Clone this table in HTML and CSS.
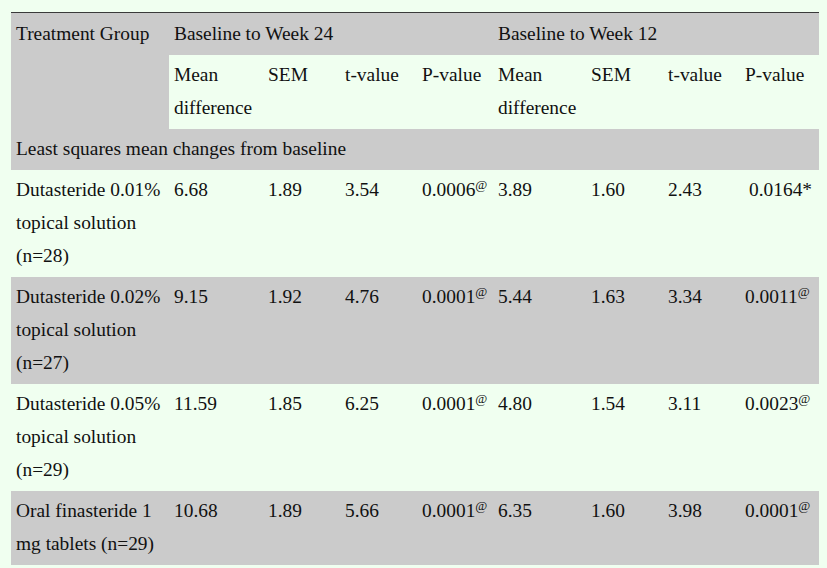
FILE: index.html
```html
<!DOCTYPE html>
<html lang="en">
<head>
<meta charset="utf-8">
<title>Least squares mean changes</title>
<link rel="stylesheet" href="styles.css">
</head>
<body>
<table class="results">
  <colgroup>
    <col class="c-group">
    <col class="c-mean1">
    <col class="c-num">
    <col class="c-num">
    <col class="c-p">
    <col class="c-mean2">
    <col class="c-num">
    <col class="c-num">
    <col class="c-last">
  </colgroup>
  <thead>
    <tr class="head-top">
      <th rowspan="2" class="gray">Treatment Group</th>
      <th colspan="4" class="gray">Baseline to Week 24</th>
      <th colspan="4" class="gray">Baseline to Week 12</th>
    </tr>
    <tr>
      <th>Mean difference</th>
      <th>SEM</th>
      <th>t-value</th>
      <th>P-value</th>
      <th>Mean difference</th>
      <th>SEM</th>
      <th>t-value</th>
      <th>P-value</th>
    </tr>
  </thead>
  <tbody>
    <tr class="gray">
      <td colspan="9">Least squares mean changes from baseline</td>
    </tr>
    <tr>
      <td>Dutasteride 0.01% topical solution (n=28)</td>
      <td>6.68</td>
      <td>1.89</td>
      <td>3.54</td>
      <td>0.0006<sup>@</sup></td>
      <td>3.89</td>
      <td>1.60</td>
      <td>2.43</td>
      <td class="shift">0.0164*</td>
    </tr>
    <tr class="gray">
      <td>Dutasteride 0.02% topical solution (n=27)</td>
      <td>9.15</td>
      <td>1.92</td>
      <td>4.76</td>
      <td>0.0001<sup>@</sup></td>
      <td>5.44</td>
      <td>1.63</td>
      <td>3.34</td>
      <td>0.0011<sup>@</sup></td>
    </tr>
    <tr>
      <td>Dutasteride 0.05% topical solution (n=29)</td>
      <td>11.59</td>
      <td>1.85</td>
      <td>6.25</td>
      <td>0.0001<sup>@</sup></td>
      <td>4.80</td>
      <td>1.54</td>
      <td>3.11</td>
      <td>0.0023<sup>@</sup></td>
    </tr>
    <tr class="gray">
      <td>Oral finasteride 1 mg tablets (n=29)</td>
      <td>10.68</td>
      <td>1.89</td>
      <td>5.66</td>
      <td>0.0001<sup>@</sup></td>
      <td>6.35</td>
      <td>1.60</td>
      <td>3.98</td>
      <td>0.0001<sup>@</sup></td>
    </tr>
  </tbody>
</table>
</body>
</html>
```

FILE: styles.css
```css
html, body {
  margin: 0;
  padding: 0;
  background: #f0fff0;
}

body {
  font-family: "Liberation Serif", "Times New Roman", serif;
  font-size: 19.4px;
  color: #111111;
}

.results {
  margin: 12px 0 0 11px;
  width: 808px;
  table-layout: fixed;
  border-collapse: collapse;
  border-top: 1px solid #3a3a3a;
}

.c-group { width: 158px; }
.c-mean1 { width: 94px; }
.c-num { width: 77px; }
.c-p { width: 76px; }
.c-mean2 { width: 93px; }
.c-last { width: 79px; }

.results th,
.results td {
  padding: 3px 5px 5px 5px;
  line-height: 33px;
  text-align: left;
  vertical-align: top;
  font-weight: normal;
}

.head-top th {
  padding-top: 4px;
}

.gray,
.gray td {
  background: #cbcbcb;
}

.results sup {
  font-size: 13px;
  line-height: 0;
  vertical-align: 7px;
}

.results td.shift {
  padding-left: 9px;
}
```
